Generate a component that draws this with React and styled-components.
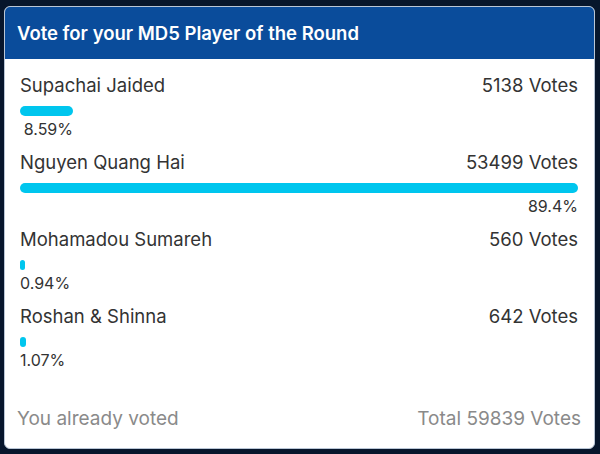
import React from 'react'
import styled, { createGlobalStyle } from 'styled-components'

const GlobalStyle = createGlobalStyle`
  html, body {
    margin: 0;
    padding: 0;
    background: #07162c;
  }
  body {
    font-family: Inter, "Liberation Sans", Arial, sans-serif;
  }
`

const Page = styled.div`
  width: 600px;
  height: 454px;
  padding: 6px 5px 5px 4px;
  box-sizing: border-box;
  background: #07162c;
`

const Card = styled.div`
  height: 100%;
  box-sizing: border-box;
  display: flex;
  flex-direction: column;
  background: #fff;
  border: 1px solid #b9c6d6;
  border-radius: 6px;
  overflow: hidden;
`

const Header = styled.div`
  height: 52px;
  flex: none;
  display: flex;
  align-items: center;
  padding: 0 12px;
  background: #0a4c9b;
  color: #fff;
  font-size: 18.5px;
  font-weight: 600;
`

const Body = styled.div`
  flex: 1;
  display: flex;
  flex-direction: column;
  padding: 15px 16px 18px 15px;
`

const Row = styled.div`
  height: 77px;
  color: #333;
`

const Line = styled.div`
  display: flex;
  justify-content: space-between;
  font-size: 18.5px;
  line-height: 22px;
`

const Track = styled.div`
  margin-top: 10px;
  height: 10px;
`

const Bar = styled.div`
  height: 100%;
  border-radius: 5px;
  background: #00c6ee;
  min-width: 5px;
`

const Pct = styled.div`
  display: inline-block;
  min-width: max-content;
  text-align: right;
  font-size: 16px;
  line-height: 18px;
  margin-top: 4px;
`

const Footer = styled.div`
  margin-top: auto;
  margin-left: -3px;
  margin-right: -3px;
  display: flex;
  justify-content: space-between;
  color: #8a8a8a;
  font-size: 19px;
  line-height: 22px;
`

const players = [
  { name: 'Supachai Jaided', votes: 5138, pct: '8.59%', width: 9.5 },
  { name: 'Nguyen Quang Hai', votes: 53499, pct: '89.4%', width: 100 },
  { name: 'Mohamadou Sumareh', votes: 560, pct: '0.94%', width: 0.94 },
  { name: 'Roshan & Shinna', votes: 642, pct: '1.07%', width: 1.07 },
]

export default function App() {
  return (
    <Page>
      <GlobalStyle />
      <Card>
        <Header>Vote for your MD5 Player of the Round</Header>
        <Body>
          {players.map(p => (
            <Row key={p.name}>
              <Line>
                <span>{p.name}</span>
                <span>{p.votes} Votes</span>
              </Line>
              <Track>
                <Bar style={{ width: `${p.width}%` }} />
              </Track>
              <Pct style={{ width: `${p.width}%` }}>{p.pct}</Pct>
            </Row>
          ))}
          <Footer>
            <span>You already voted</span>
            <span>Total 59839 Votes</span>
          </Footer>
        </Body>
      </Card>
    </Page>
  )
}
